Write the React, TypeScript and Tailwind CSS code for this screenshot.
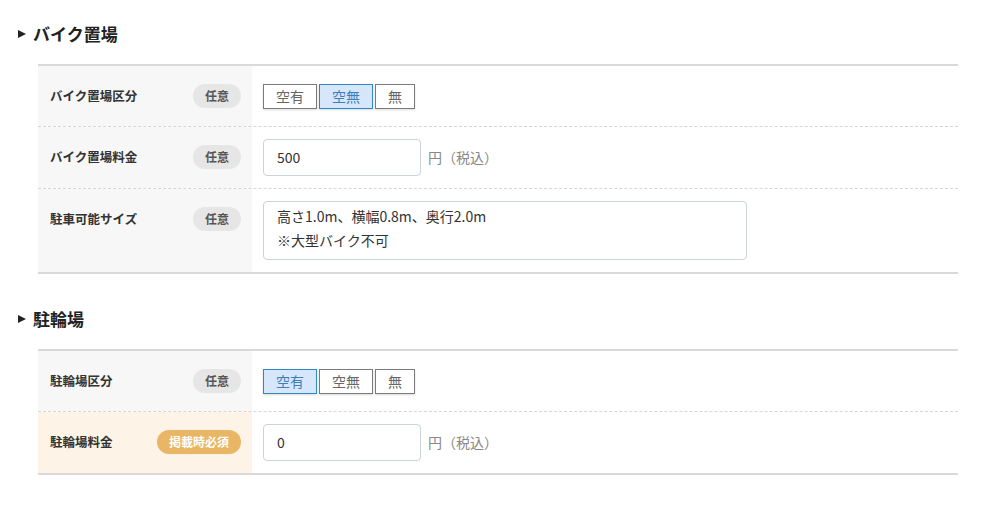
type Badge = "optional" | "required";

function Tag({ kind }: { kind: Badge }) {
  if (kind === "required") {
    return (
      <span className="inline-flex h-6 items-center rounded-full bg-[#e8b665] px-3 text-[12px] font-bold text-white">
        掲載時必須
      </span>
    );
  }
  return (
    <span className="inline-flex h-6 items-center rounded-full bg-[#e6e6e6] px-3 text-[12px] font-bold text-[#555]">
      任意
    </span>
  );
}

function Row({
  label,
  kind = "optional",
  last = false,
  children,
}: {
  label: string;
  kind?: Badge;
  last?: boolean;
  children: React.ReactNode;
}) {
  return (
    <div className={"flex " + (last ? "" : "border-b border-dashed border-[#d6d6d6]")}>
      <div
        className={
          "w-[214px] shrink-0 pl-3 pr-[11px] py-3 " + (kind === "required" ? "bg-[#fdf3e6]" : "bg-[#f7f7f7]")
        }
      >
        <div className="flex h-9 items-center justify-between">
          <span className="text-[12.5px] font-bold text-[#333]">{label}</span>
          <Tag kind={kind} />
        </div>
      </div>
      <div className="flex-1 py-3 pl-[11px]">{children}</div>
    </div>
  );
}

function Choices({ active }: { active: number }) {
  const opts = [
    { t: "空有", w: "w-[54px]" },
    { t: "空無", w: "w-[54px]" },
    { t: "無", w: "w-10" },
  ];
  return (
    <div className="flex h-9 items-center gap-[2px]">
      {opts.map((o, i) => (
        <div
          key={o.t}
          className={
            "flex h-[25px] items-center justify-center border text-[14px] shadow-[0_1px_2px_rgba(0,0,0,0.15)] " +
            o.w +
            (i === active
              ? " border-[#2f88c6] bg-[#d6e7fb] text-[#3d7fb8]"
              : " border-[#7b7b7b] bg-white text-[#666]")
          }
        >
          {o.t}
        </div>
      ))}
    </div>
  );
}

function Price({ value }: { value: string }) {
  return (
    <div className="flex items-center gap-[7px]">
      <div className="flex h-[37px] w-[158px] items-center rounded border border-[#ccd3db] bg-white pl-[13px] text-[14px] text-[#333]">
        {value}
      </div>
      <span className="text-[14px] text-[#888]">円（税込）</span>
    </div>
  );
}

function Heading({ children }: { children: React.ReactNode }) {
  return (
    <div className="flex h-5 items-center gap-[7px] pl-[18px]">
      <span className="h-0 w-0 border-y-[4.5px] border-l-[8px] border-y-transparent border-l-[#222]" />
      <h2 className="text-[17px] font-bold text-[#222]">{children}</h2>
    </div>
  );
}

export default function App() {
  return (
    <div
      className="min-h-[511px] w-[986px] bg-white pt-6"
      style={{ fontFamily: '"Noto Sans CJK JP", "Noto Sans", sans-serif' }}
    >
      <Heading>バイク置場</Heading>
      <div className="ml-[38px] mt-5 w-[920px] border-y-2 border-[#d9d9d9]">
        <Row label="バイク置場区分">
          <Choices active={1} />
        </Row>
        <Row label="バイク置場料金">
          <Price value="500" />
        </Row>
        <Row label="駐車可能サイズ" last>
          <div className="h-[59px] w-[484px] rounded border border-[#ccd3db] bg-white px-[13px] pt-[2px] text-[14px] leading-6 text-[#333]">
            <div>高さ1.0m、横幅0.8m、奥行2.0m</div>
            <div>※大型バイク不可</div>
          </div>
        </Row>
      </div>

      <div className="mt-[35px]">
        <Heading>駐輪場</Heading>
      </div>
      <div className="ml-[38px] mt-5 w-[920px] border-y-2 border-[#d9d9d9]">
        <Row label="駐輪場区分">
          <Choices active={0} />
        </Row>
        <Row label="駐輪場料金" kind="required" last>
          <Price value="0" />
        </Row>
      </div>
    </div>
  );
}
